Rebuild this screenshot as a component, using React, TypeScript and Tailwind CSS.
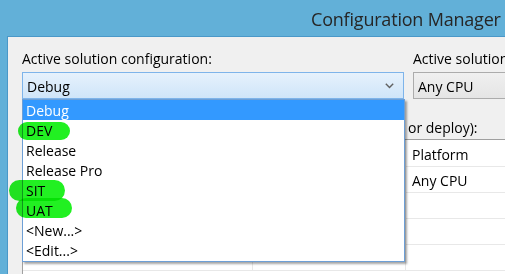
import React from "react";

const items = ["Debug", "DEV", "Release", "Release Pro", "SIT", "UAT", "<New...>", "<Edit...>"];

export default function App() {
  const font = { fontFamily: '"Open Sans", "Noto Sans", sans-serif' };
  return (
    <div
      className="relative w-[505px] h-[274px] overflow-hidden bg-[#62b0d8] flex flex-col text-[14px] text-[#000]"
      style={font}
    >
      <div className="h-[36px] shrink-0 pl-[311px] pt-[6px] whitespace-nowrap text-[18px] tracking-[-0.2px] leading-[26px] text-[#262626]">
        Configuration Manager
      </div>
      <div className="flex-1 ml-[7px] bg-[#f0f0f0] border-l border-t border-[#4a98c8] pl-[14px] pt-[10px] flex flex-col">
        <div className="flex gap-[9px]">
          <div className="w-[382px] shrink-0 flex flex-col">
            <div className="h-[20px] leading-[24px] whitespace-nowrap">Active solution configuration:</div>
            <div className="mt-[5px] h-[27px] border border-[#7eb4ea] bg-gradient-to-b from-[#e6f1fc] to-[#cfe5f9] flex items-center pl-[4px] pr-[9px]">
              <span className="flex-1 leading-[20px] pt-[2px]">Debug</span>
              <svg width="9" height="6" viewBox="0 0 9 6" className="mt-[1px]">
                <path d="M0.8 0.8 L4.5 4.6 L8.2 0.8" fill="none" stroke="#606060" strokeWidth="1.4" />
              </svg>
            </div>
          </div>
          <div className="flex-1 flex flex-col min-w-0">
            <div className="h-[20px] leading-[24px] whitespace-nowrap">Active solution platform:</div>
            <div className="mt-[5px] h-[27px] border border-[#acacac] border-r-0 bg-gradient-to-b from-[#f0f0f0] to-[#e5e5e5] flex items-center pl-[4px]">
              <span className="leading-[20px] pt-[2px] whitespace-nowrap">Any CPU</span>
            </div>
          </div>
        </div>
        <div className="mt-[17px] h-[20px] leading-[24px] whitespace-nowrap flex">
          <span className="w-[386px] shrink-0">Project contexts (check the project configurations to build</span>
          <span>or deploy):</span>
        </div>
        <div className="mt-[3px] flex-1 bg-white border-l border-t border-[#a0a0a0] flex flex-col">
          <div className="flex h-[27px] border-b border-[#e8e8e8]">
            <div className="w-[230px] border-r border-[#e8e8e8] pl-[6px] leading-[30px]">Project</div>
            <div className="w-[153px] border-r border-[#e8e8e8] pl-[6px] leading-[30px]">Configuration</div>
            <div className="flex-1 pl-[6px] leading-[30px]">Platform</div>
          </div>
          {[0, 1, 2, 3].map((i) => (
            <div key={i} className="flex h-[26px] border-b border-[#e8e8e8] shrink-0">
              <div className="w-[230px] border-r border-[#e8e8e8]"></div>
              <div className="w-[153px] border-r border-[#e8e8e8] py-[1px]">
                {i === 0 && <div className="h-full border-r border-[#8c8c8c]"></div>}
              </div>
              <div className="flex-1 pl-[6px] leading-[28px]">{i === 0 ? "Any CPU" : ""}</div>
            </div>
          ))}
        </div>
      </div>

      {/* dropdown list */}
      <div className="absolute left-[22px] top-[99px] w-[383px] h-[163px] bg-white border border-[#6d9fd6] shadow-[2px_2px_2px_rgba(0,0,0,0.35)] flex flex-col">
        {items.map((t, i) => (
          <div
            key={t}
            className={
              "h-[20px] leading-[22px] pl-[3px] whitespace-nowrap overflow-hidden " +
              (i === 0 ? "bg-[#3399ff] text-white" : "text-black")
            }
          >
            {t}
          </div>
        ))}
      </div>

      {/* green marker highlights */}
      <div className="absolute left-[18px] top-[122px] w-[52px] h-[18px] rounded-full bg-[#22f022] mix-blend-multiply"></div>
      <div className="absolute left-[9px] top-[180px] w-[56px] h-[21px] rounded-full bg-[#22f022] mix-blend-multiply"></div>
      <div className="absolute left-[16px] top-[198px] w-[56px] h-[20px] rounded-full bg-[#22f022] mix-blend-multiply"></div>
    </div>
  );
}
